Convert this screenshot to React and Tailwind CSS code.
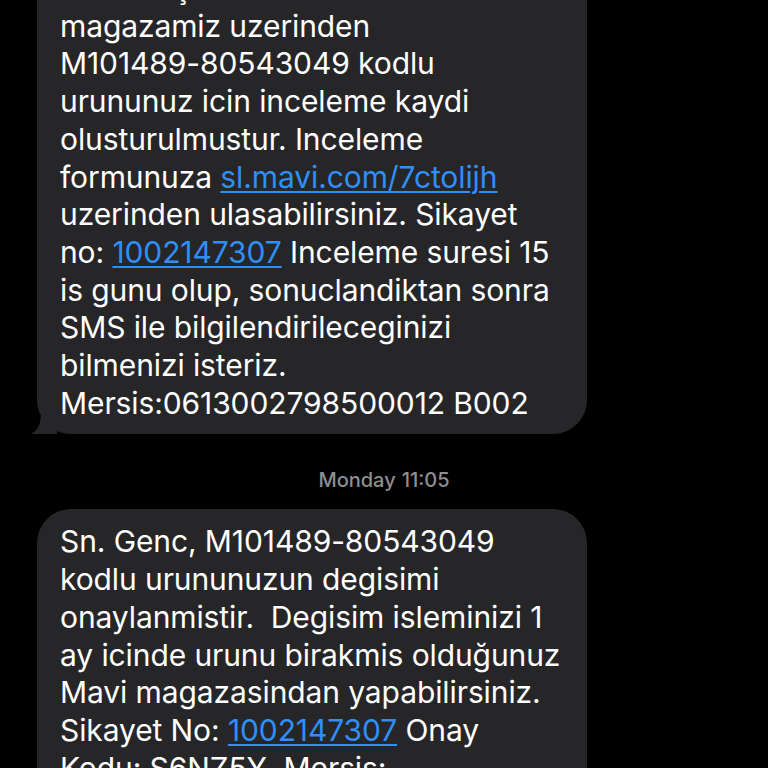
import React from 'react'

function Link({ children }) {
  return <span className="text-[#2f8ff5] underline decoration-[1.5px] underline-offset-[3px]">{children}</span>
}

function Bubble({ lines, tail }) {
  return (
    <div className="relative ml-[37px] w-[550px] rounded-[34px] bg-[#262628] pl-[23px] pr-4 pt-[14px] pb-[12px]">
      <div className="text-[30px] leading-[37.7px] text-white whitespace-pre tracking-[-0.1px]">
        {lines.map((line, i) => (
          <div key={i}>{line}</div>
        ))}
      </div>
      {tail && (
        <svg className="absolute -left-[10px] bottom-0" width="30" height="22" viewBox="0 0 30 22">
          <path d="M30 0 L30 22 L 4 22 C 12 18 14 10 14 0 Z" fill="#262628" />
        </svg>
      )}
    </div>
  )
}

export default function App() {
  const first = [
    'ORNEK ÇARSI SUBESI MAVI',
    'magazamiz uzerinden',
    'M101489-80543049 kodlu',
    'urununuz icin inceleme kaydi',
    'olusturulmustur. Inceleme',
    <>formunuza <Link>sl.mavi.com/7ctolijh</Link></>,
    'uzerinden ulasabilirsiniz. Sikayet',
    <>no: <Link>1002147307</Link> Inceleme suresi 15</>,
    'is gunu olup, sonuclandiktan sonra',
    'SMS ile bilgilendirileceginizi',
    'bilmenizi isteriz.',
    'Mersis:0613002798500012 B002',
  ]
  const second = [
    'Sn. Genc, M101489-80543049',
    'kodlu urununuzun degisimi',
    'onaylanmistir.  Degisim isleminizi 1',
    'ay icinde urunu birakmis olduğunuz',
    'Mavi magazasindan yapabilirsiniz.',
    <>Sikayet No: <Link>1002147307</Link> Onay</>,
    'Kodu: S6NZ5Y  Mersis:',
    '0613002798500012 B002',
  ]
  return (
    <div className="h-[768px] w-[768px] overflow-hidden bg-black font-['Inter','Noto_Sans',sans-serif]">
      <div className="-mt-[44px]">
        <Bubble lines={first} tail />
        <div className="flex h-[75px] items-center justify-center pt-[16px] text-[20px] font-medium text-[#8e8e92]">
          <span>Monday</span>
          <span className="ml-[6px]">11:05</span>
        </div>
        <Bubble lines={second} />
      </div>
    </div>
  )
}
